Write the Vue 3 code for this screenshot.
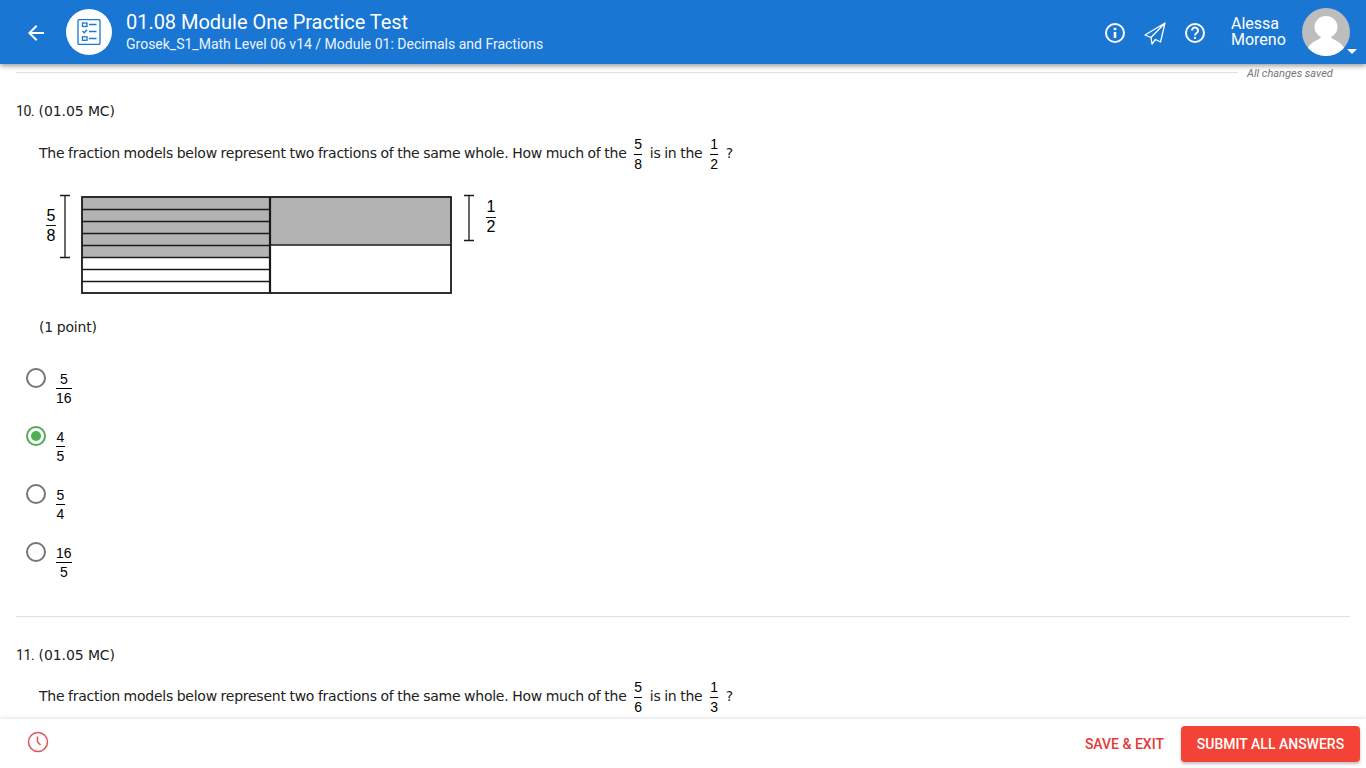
<script setup>
const options = [
  { num: '5', den: '16', selected: false },
  { num: '4', den: '5', selected: true },
  { num: '5', den: '4', selected: false },
  { num: '16', den: '5', selected: false }
]
const stripes = [209, 221, 233, 245, 257, 269, 281]
</script>

<template>
  <div class="page">
    <header class="topbar">
      <svg class="back" width="24" height="24" viewBox="0 0 24 24">
        <path d="M20 11H7.830l5.590-5.590L12 4l-8 8 8 8 1.410-1.410L7.830 13H20z" fill="#fff" />
      </svg>
      <div class="logo">
        <svg width="26" height="26" viewBox="0 0 26 26" fill="none" stroke="#1976d2" stroke-width="1.300">
          <rect x="2" y="0.500" width="22" height="25" rx="1.500" />
          <rect x="6.500" y="4" width="4.500" height="3.500" />
          <path d="M13 5.500h7.500M13 12.500h7.500M13 19.500h7.500" />
          <path d="M6.500 12l1.700 1.700 2.800-3" />
          <rect x="6.500" y="17.800" width="4.500" height="3.500" />
        </svg>
      </div>
      <div class="titles">
        <div class="title">01.08 Module One Practice Test</div>
        <div class="subtitle">Grosek_S1_Math Level 06 v14 / Module 01: Decimals and Fractions</div>
      </div>
      <div class="actions">
        <svg width="24" height="24" viewBox="0 0 24 24" fill="none" stroke="#fff" stroke-width="2">
          <circle cx="12" cy="12" r="9" />
          <path d="M12 11v6" stroke-width="2.600" />
          <path d="M12 6.800v2.400" stroke-width="2.600" />
        </svg>
        <svg width="24" height="24" viewBox="0 0 24 24" fill="none" stroke="#fff" stroke-width="1.300" stroke-linejoin="round">
          <path d="M22 2L2 14l6 2.500L22 2zM22 2L8 16.500l1 6.500 3.500-4.500 5 2.500L22 2z" />
        </svg>
        <svg width="24" height="24" viewBox="0 0 24 24" fill="none" stroke="#fff" stroke-width="2">
          <circle cx="12" cy="12" r="9" />
          <path d="M9 9.500a3 3 0 1 1 4.700 2.500c-1.100.8-1.700 1.300-1.700 2.500" />
          <path d="M12 16v2" />
        </svg>
      </div>
      <div class="username">Alessa<br />Moreno</div>
      <div class="avatar">
        <svg width="48" height="48" viewBox="0 0 48 48">
          <circle cx="24" cy="24" r="24" fill="#bdbdbd" />
          <clipPath id="avatar-clip"><circle cx="24" cy="24" r="24" /></clipPath>
          <g clip-path="url(#avatar-clip)" fill="#fff">
            <ellipse cx="24" cy="19" rx="11.500" ry="11" />
            <path d="M4 46c1-8 6-12 13-15c2-1 2-2 2-3h10c0 1 0 2 2 3c7 3 12 7 13 15v4H4z" />
          </g>
        </svg>
        <span class="caret"></span>
      </div>
    </header>

    <main class="content">
      <div class="saved-row">
        <hr class="rule" />
        <span class="saved">All changes saved</span>
      </div>

      <section class="question first">
        <div class="qhead"><span class="qnum">10.</span> (01.05 MC)</div>
        <p class="prompt">
          The fraction models below represent two fractions of the same whole. How much of the
          <span class="frac"><span>5</span><span class="den">8</span></span>
          is in the
          <span class="frac"><span>1</span><span class="den">2</span></span>
          ?
        </p>
        <svg class="model" width="470" height="110" viewBox="30 190 470 110">
          <rect x="82" y="197" width="188" height="60" fill="#b3b3b3" />
          <rect x="270" y="197" width="181" height="48" fill="#b3b3b3" />
          <g stroke="#1a1a1a" fill="none">
            <path v-for="y in stripes" :key="y" :d="`M82 ${y + 0.5}H270`" stroke-width="1.300" />
            <path d="M270 245H451" stroke-width="1.600" />
            <rect x="82" y="197" width="369" height="96" stroke-width="1.800" />
            <path d="M270 197V293" stroke-width="2.200" />
            <path d="M65 195.500V258M60 195.500H70M60 257.500H70" stroke-width="1.300" />
            <path d="M469 195.500V241M464 195.500H474M464 240.500H474" stroke-width="1.300" />
            <path d="M46 225.500H56M486 217.500H496" />
          </g>
          <g class="model-label" text-anchor="middle">
            <text x="51" y="221">5</text>
            <text x="51" y="241">8</text>
            <text x="491" y="212">1</text>
            <text x="491" y="232">2</text>
          </g>
        </svg>
        <div class="points">(1 point)</div>

        <ul class="options">
          <li v-for="opt in options" :key="opt.num + opt.den" class="option">
            <span class="radio" :class="{ on: opt.selected }"></span>
            <span class="frac big"><span>{{ opt.num }}</span><span class="den">{{ opt.den }}</span></span>
          </li>
        </ul>
      </section>

      <hr class="rule divider" />

      <section class="question second">
        <div class="qhead"><span class="qnum">11.</span> (01.05 MC)</div>
        <p class="prompt">
          The fraction models below represent two fractions of the same whole. How much of the
          <span class="frac"><span>5</span><span class="den">6</span></span>
          is in the
          <span class="frac"><span>1</span><span class="den">3</span></span>
          ?
        </p>
      </section>
    </main>

    <footer class="bottombar">
      <svg class="clock" width="22" height="22" viewBox="0 0 22 22" fill="none" stroke="#e0545a" stroke-width="1.500">
        <circle cx="11" cy="11" r="9.500" />
        <path d="M10.500 5.500V11l3 3" />
      </svg>
      <button class="save" type="button">SAVE &amp; EXIT</button>
      <button class="submit" type="button">SUBMIT ALL ANSWERS</button>
    </footer>
  </div>
</template>

<style scoped>
.page {
  height: 768px;
  display: flex;
  flex-direction: column;
  overflow: hidden;
  background: #fff;
  color: #212121;
  font-family: "DejaVu Sans", sans-serif;
  font-size: 14px;
}
.topbar {
  flex: 0 0 64px;
  display: flex;
  align-items: center;
  padding: 0 16px 0 24px;
  background: #1976d2;
  color: #fff;
  font-family: Roboto, sans-serif;
  box-shadow: 0 2px 5px rgba(0, 0, 0, 0.4);
  position: relative;
  z-index: 2;
}
.back {
  flex: none;
  margin-top: 2px;
}
.logo {
  width: 46px;
  height: 46px;
  margin-left: 18px;
  border-radius: 50%;
  background: #fff;
  display: flex;
  align-items: center;
  justify-content: center;
  flex: none;
}
.titles {
  margin-left: 14px;
  margin-top: -2px;
  flex: 1;
}
.title {
  font-size: 20px;
  line-height: 24px;
  margin-top: 1px;
  letter-spacing: -0.03px;
}
.subtitle {
  font-size: 14px;
  line-height: 20px;
  opacity: 0.92;
}
.actions {
  display: flex;
  gap: 16px;
  margin-right: 24px;
  margin-top: 2px;
}
.username {
  font-size: 16px;
  line-height: 16px;
  width: 71px;
}
.avatar {
  position: relative;
  width: 48px;
  height: 48px;
}
.avatar svg {
  display: block;
}
.caret {
  position: absolute;
  right: -7px;
  bottom: 2px;
  border-left: 5px solid transparent;
  border-right: 5px solid transparent;
  border-top: 5px solid #fff;
}
.content {
  flex: 1;
  min-height: 0;
  overflow: hidden;
  padding: 0 16px;
}
.saved-row {
  display: flex;
  align-items: center;
  height: 16px;
}
.rule {
  border: 0;
  border-top: 1px solid #e0e0e0;
  margin: 0;
}
.saved-row .rule {
  flex: 1;
}
.saved {
  font-family: Roboto, sans-serif;
  font-style: italic;
  font-size: 11px;
  color: #757575;
  width: 112px;
  padding-left: 9px;
  padding-top: 2px;
  box-sizing: border-box;
}
.question.first {
  padding-top: 21px;
}
.question.second {
  padding-top: 28px;
}
.qhead {
  line-height: 20px;
  letter-spacing: -0.1px;
}
.qnum {
  font-family: Roboto, sans-serif;
  letter-spacing: -0.4px;
}
.prompt {
  margin: 12px 0 0 23px;
  line-height: 40px;
  height: 40px;
  white-space: nowrap;
  letter-spacing: -0.25px;
  word-spacing: -0.45px;
}
.second .prompt {
  margin-top: 11px;
}
.frac {
  display: inline-flex;
  flex-direction: column;
  align-items: center;
  vertical-align: middle;
  font-family: "Liberation Sans", sans-serif;
  font-size: 14px;
  line-height: 19px;
  margin: 0 4px;
  color: #000;
  letter-spacing: 0;
  word-spacing: 0;
}
.frac .den {
  border-top: 1px solid #000;
  align-self: stretch;
  text-align: center;
}
.model {
  display: block;
  margin: 17px 0 0 14px;
}
.model-label {
  font-family: "Liberation Sans", sans-serif;
  font-size: 16px;
  fill: #000;
}
.points {
  margin: 17px 0 0 23px;
  line-height: 20px;
  letter-spacing: -0.2px;
  word-spacing: -0.45px;
}
.options {
  list-style: none;
  margin: 0;
  padding: 27px 0 0 10px;
}
.option {
  display: flex;
  height: 58px;
  align-items: flex-start;
}
.radio {
  box-sizing: border-box;
  width: 20px;
  height: 20px;
  border: 2px solid #757575;
  border-radius: 50%;
  margin-top: 4px;
  position: relative;
  flex: none;
}
.radio.on {
  border-color: #4caf50;
}
.radio.on::after {
  content: "";
  position: absolute;
  inset: 3px;
  border-radius: 50%;
  background: #4caf50;
}
.frac.big {
  margin: 6px 0 0 10px;
  min-width: 9px;
  line-height: 18px;
}
.divider {
  margin-top: 20px;
}
.bottombar {
  flex: 0 0 49px;
  display: flex;
  align-items: center;
  padding: 0 6px 0 27px;
  background: #fff;
  box-shadow: 0 -1px 4px rgba(0, 0, 0, 0.12);
  position: relative;
  z-index: 2;
  font-family: Roboto, sans-serif;
}
.clock {
  margin-top: -4px;
  margin-right: auto;
}
.save,
.submit {
  font-family: Roboto, sans-serif;
  font-size: 14px;
  font-weight: 500;
  border: 0;
  cursor: pointer;
}
.save {
  background: none;
  color: #e53935;
  padding: 0;
  margin-right: 17px;
}
.submit {
  width: 179px;
  height: 36px;
  background: #f44336;
  color: #fff;
  border-radius: 4px;
  box-shadow: 0 2px 3px rgba(0, 0, 0, 0.25);
}
</style>
